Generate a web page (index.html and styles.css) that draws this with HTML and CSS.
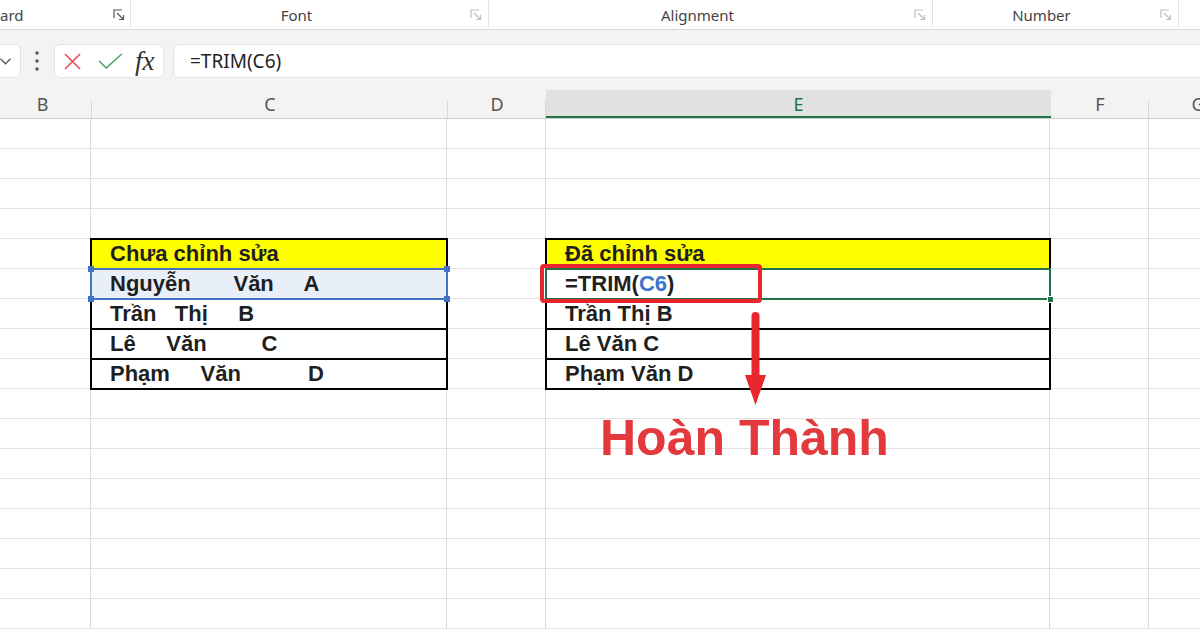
FILE: index.html
```html
<!DOCTYPE html>
<html lang="vi">
<head>
    <meta charset="UTF-8">
    <meta name="viewport" content="width=device-width, initial-scale=1.0">
    <title>Hàm TRIM trong Excel</title>
    <link rel="stylesheet" href="styles.css">
</head>
<body>

    <!-- ribbon group captions -->
    <div class="ribbon">
        <div class="group g-clip">
            <span class="group-label">ard</span>
            <svg class="launcher dark" viewBox="0 0 12 12"><path d="M1 9V1h8M4 4l6.5 6.5M10.5 6v4.5H6"/></svg>
        </div>
        <div class="group g-font">
            <span class="group-label">Font</span>
            <svg class="launcher" viewBox="0 0 12 12"><path d="M1 9V1h8M4 4l6.5 6.5M10.5 6v4.5H6"/></svg>
        </div>
        <div class="group g-align">
            <span class="group-label">Alignment</span>
            <svg class="launcher" viewBox="0 0 12 12"><path d="M1 9V1h8M4 4l6.5 6.5M10.5 6v4.5H6"/></svg>
        </div>
        <div class="group g-num">
            <span class="group-label">Number</span>
            <svg class="launcher" viewBox="0 0 12 12"><path d="M1 9V1h8M4 4l6.5 6.5M10.5 6v4.5H6"/></svg>
        </div>
    </div>

    <!-- formula bar -->
    <div class="formula-bar">
        <div class="name-box">
            <svg class="chevron" viewBox="0 0 11 7"><path d="M0.5 0.8l5 5 5-5"/></svg>
        </div>
        <svg class="grip" viewBox="0 0 4 20"><circle cx="2" cy="2" r="1.7"/><circle cx="2" cy="10" r="1.7"/><circle cx="2" cy="18" r="1.7"/></svg>
        <div class="fx-tools">
            <svg class="btn-cancel" viewBox="0 0 18 18"><path d="M1 1l16 16M17 1L1 17"/></svg>
            <svg class="btn-enter" viewBox="0 0 26 17"><path d="M1 8.5l7.5 7.5L25 1"/></svg>
            <span class="fx">fx</span>
        </div>
        <div class="formula-input">=TRIM(C6)</div>
    </div>

    <!-- column letters -->
    <div class="col-heads">
        <div class="col-head">B</div>
        <div class="col-head">C</div>
        <div class="col-head">D</div>
        <div class="col-head active">E</div>
        <div class="col-head">F</div>
        <div class="col-head">G</div>
    </div>

    <!-- worksheet -->
    <div class="sheet">
        <div class="cell box head col-c r5">Chưa chỉnh sửa</div>
        <div class="cell box ref col-c r6">Nguyễn       Văn     A<i class="knob tl"></i><i class="knob tr"></i><i class="knob bl"></i><i class="knob br"></i></div>
        <div class="cell box col-c r7">Trần   Thị     B</div>
        <div class="cell box col-c r8">Lê     Văn         C</div>
        <div class="cell box col-c r9">Phạm     Văn           D</div>

        <div class="cell box head col-e r5">Đã chỉnh sửa</div>
        <div class="cell box active col-e r6">=TRIM(<span class="ref-text">C6</span>)<span class="callout"></span><i class="fill-handle"></i></div>
        <div class="cell box col-e r7">Trần Thị B</div>
        <div class="cell box col-e r8">Lê Văn C</div>
        <div class="cell box col-e r9">Phạm Văn D</div>

        <svg class="arrow" viewBox="0 0 24 94"><path d="M11.5 5V70"/><polygon points="1,64 22,64 11.5,94"/></svg>
        <div class="done">Hoàn Thành</div>
    </div>

</body>
</html>
```

FILE: styles.css
```css
body {
    margin: 0;
    width: 1200px;
    height: 630px;
    overflow: hidden;
    font-family: "Noto Sans", "Open Sans", sans-serif;
    background: #fff;
}

/* ribbon */
.ribbon {
    display: flex;
    height: 29px;
    background: #fff;
    border-bottom: 1px solid #d9d9d9;
}

.group {
    flex: none;
    display: flex;
    align-items: center;
    box-sizing: border-box;
    height: 27px;
    padding-top: 3px;
    border-right: 1px solid #e3e3e3;
}

.group-label {
    flex: 1;
    text-align: center;
    font-size: 15px;
    color: #444;
}

.g-clip { width: 131px; }
.g-clip .group-label { text-align: left; }
.g-font { width: 358px; }
.g-font .group-label { padding-right: 8px; }
.g-align { width: 444px; }
.g-align .group-label { padding-right: 8px; }
.g-num { width: 246px; }
.g-num .group-label { padding-right: 10px; }

.launcher {
    width: 12px;
    height: 12px;
    margin-right: 6px;
    fill: none;
    stroke: #bdbdbd;
    stroke-width: 1.2;
}

.launcher.dark {
    stroke: #555;
    margin-right: 5px;
}

/* formula bar */
.formula-bar {
    display: flex;
    align-items: center;
    height: 34px;
    padding: 14px 0 12px;
    background: #f3f3f3;
}

.name-box,
.fx-tools,
.formula-input {
    box-sizing: border-box;
    height: 34px;
    background: #fff;
    border: 1px solid #e4e4e4;
    border-radius: 6px;
}

.name-box {
    width: 31px;
    margin-left: -10px;
    padding-left: 9px;
    display: flex;
    align-items: center;
}

.chevron {
    width: 11px;
    height: 7px;
    fill: none;
    stroke: #555;
    stroke-width: 1.3;
}

.grip {
    width: 4px;
    height: 20px;
    margin-left: 14px;
    fill: #555;
}

.fx-tools {
    width: 110px;
    margin-left: 15px;
    display: flex;
    align-items: center;
    padding-left: 9px;
}

.btn-cancel {
    width: 17px;
    height: 17px;
    fill: none;
    stroke: #e5484d;
    stroke-width: 1.6;
}

.btn-enter {
    width: 25px;
    height: 16px;
    margin-left: 17px;
    fill: none;
    stroke: #4aa36b;
    stroke-width: 1.6;
}

.fx {
    margin-left: 12px;
    font-family: "Liberation Serif", serif;
    font-style: italic;
    font-size: 27px;
    line-height: 1;
    color: #333;
}

.formula-input {
    flex: 1;
    margin-left: 9px;
    margin-right: -20px;
    padding-left: 16px;
    display: flex;
    align-items: center;
    font-size: 19px;
    color: #222;
}

/* column letters */
.col-heads {
    display: grid;
    grid-template-columns: 99px 356px 98px 505px 98px 98px;
    margin-left: -7px;
    height: 28px;
    background: #f3f3f3;
    border-bottom: 1px solid #cfcfcf;
}

.col-head {
    position: relative;
    display: flex;
    align-items: center;
    justify-content: center;
    font-size: 18px;
    color: #555;
}

.col-head::after {
    content: "";
    position: absolute;
    right: 0;
    bottom: 0;
    width: 1px;
    height: 18px;
    background: #d8d8d8;
}

.col-head.active {
    background: #e1e1e1;
    color: #1f7145;
    box-shadow: inset 0 -2px 0 #217346;
}

.col-head.active::after {
    display: none;
}

/* worksheet grid */
.sheet {
    display: grid;
    grid-template-columns: 99px 356px 98px 505px 98px 98px;
    grid-template-rows: repeat(17, 30px);
    margin-left: -7px;
    background:
        linear-gradient(to right,
            transparent 0 97px, #dcdcdc 97px 98px,
            transparent 98px 453px, #dcdcdc 453px 454px,
            transparent 454px 552px, #dcdcdc 552px 553px,
            transparent 553px 1056px, #dcdcdc 1056px 1057px,
            transparent 1057px 1155px, #dcdcdc 1155px 1156px,
            transparent 1156px),
        repeating-linear-gradient(to bottom, transparent 0 29px, #e2e2e2 29px 30px);
}

.col-c { grid-column: 2; }
.col-e { grid-column: 4; }
.r5 { grid-row: 5; }
.r6 { grid-row: 6; }
.r7 { grid-row: 7; }
.r8 { grid-row: 8; }
.r9 { grid-row: 9; }

.cell {
    display: flex;
    align-items: flex-end;
    padding: 0 0 3px 18px;
    font-family: "Liberation Sans", Arial, sans-serif;
    font-weight: bold;
    font-size: 22px;
    line-height: 22px;
    color: #1f1f1f;
    white-space: pre;
}

.box {
    margin: -1px;
    border: 2px solid #000;
    background: #fff;
}

.col-c.box {
    margin-left: -2px;
    margin-right: 0;
}

.col-e.box {
    margin-right: 0;
}

.head {
    background: #ffff00;
}

/* referenced range C6 */
.ref {
    position: relative;
    z-index: 1;
    border-color: #4472c4;
    background: #e9eff9;
}

.knob {
    position: absolute;
    width: 6px;
    height: 6px;
    background: #4472c4;
}

.knob.tl { left: -4px; top: -4px; }
.knob.tr { right: -4px; top: -4px; }
.knob.bl { left: -4px; bottom: -4px; }
.knob.br { right: -4px; bottom: -4px; }

/* cell being edited */
.active {
    position: relative;
    z-index: 1;
    border-color: #217346;
}

.ref-text {
    color: #3a76c9;
}

.callout {
    position: absolute;
    left: -7px;
    top: -6px;
    width: 222px;
    height: 39px;
    box-sizing: border-box;
    border: 4px solid #e8262d;
    border-radius: 4px;
}

.fill-handle {
    position: absolute;
    right: -5px;
    bottom: -5px;
    width: 5px;
    height: 5px;
    background: #217346;
    border: 1px solid #fff;
}

.arrow {
    grid-column: 4;
    grid-row: 7 / span 4;
    align-self: start;
    justify-self: start;
    z-index: 2;
    width: 24px;
    height: 94px;
    margin: 12px 0 0 198px;
    fill: #e8262d;
    stroke: #e8262d;
    stroke-width: 8;
    stroke-linecap: round;
}

.arrow polygon {
    stroke: none;
}

.done {
    grid-column: 4;
    grid-row: 10 / span 3;
    align-self: start;
    justify-self: start;
    margin-left: 54px;
    padding-top: 24px;
    font-family: "Liberation Sans", Arial, sans-serif;
    font-weight: bold;
    font-size: 50px;
    line-height: 50px;
    color: #e4393c;
    white-space: nowrap;
}
```
